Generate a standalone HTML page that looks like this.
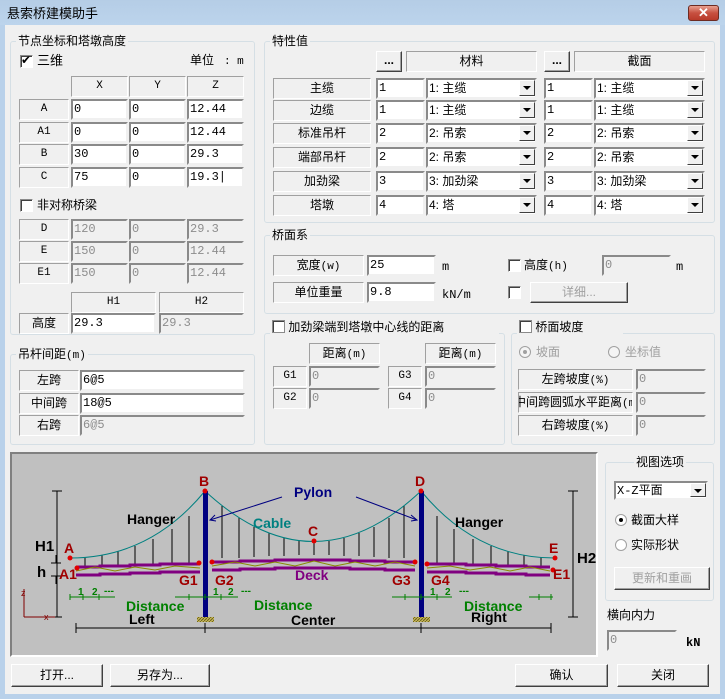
<!DOCTYPE html>
<html><head><meta charset="utf-8">
<style>
*{box-sizing:border-box;margin:0;padding:0}
body{width:725px;height:699px;overflow:hidden;background:#b9d1ea;font-family:"Liberation Sans","Noto Sans CJK SC",sans-serif;font-size:12px;color:#000;position:relative}
.a{position:absolute}
.title{left:0;top:0;width:725px;height:25px;background:linear-gradient(#b5cde6,#bcd4ec);}
.title span{position:absolute;left:7px;top:3px;font-size:13px}
.close{left:688px;top:5px;width:31px;height:16px;background:linear-gradient(#e8a090,#c75040 50%,#b83a2a);border:1px solid #6d2b22;border-radius:3px;color:#fff;font-weight:bold;font-size:13px;line-height:13px;text-align:center}
.client{left:5px;top:25px;width:715px;height:669px;background:#f0f0f0}
.grp{position:absolute;border:1px solid #d5dfe5;border-radius:3px}
.gt{position:absolute;background:#f0f0f0;padding:0 2px;font-size:12px;line-height:14px}
.lb{position:absolute;border:1px solid;border-color:#a0a0a0 #fff #fff #a0a0a0;background:#f0f0f0;text-align:center;font-size:12px;line-height:18px}
.mono{font-family:"Liberation Mono","Noto Sans CJK SC",monospace;font-size:11px}
.ed{position:absolute;background:#fff;border:2px solid;border-color:#8a8a8a #f0f0f0 #f0f0f0 #8a8a8a;font-family:"Liberation Mono",monospace;font-size:12px;line-height:16px;padding-left:1px;overflow:hidden;white-space:nowrap}
.dis{background:#f0f0f0;color:#8d8d8d}
.cb{position:absolute;background:#fff;border:2px solid;border-color:#8a8a8a #f0f0f0 #f0f0f0 #8a8a8a;font-size:12px;line-height:16px;padding-left:1px;white-space:nowrap;overflow:hidden}
.cb i{position:absolute;right:0;top:0;width:16px;height:16px;background:#f0f0f0;border:1px solid;border-color:#fff #404040 #404040 #fff;font-style:normal}
.cb i:after{content:"";position:absolute;left:3px;top:5px;border-left:4px solid transparent;border-right:4px solid transparent;border-top:4px solid #000}
.btn{position:absolute;background:#f0f0f0;border:1px solid;border-color:#fff #404040 #404040 #fff;box-shadow:inset -1px -1px #a0a0a0;text-align:center;font-size:12px}
.chk{position:absolute;width:13px;height:13px;background:#fff;border:1px solid;border-color:#8a8a8a #fff #fff #8a8a8a;box-shadow:inset 1px 1px #404040}
.rad{position:absolute;width:12px;height:12px;border-radius:50%;background:#fff;border:1px solid #a0a0a0}
.t{position:absolute;font-size:12px;line-height:14px;white-space:nowrap}
</style></head><body>
<div class="a title"><span>悬索桥建模助手</span></div>
<div class="a close">✕</div>
<div class="a client"></div>

<div class="grp" style="left:10px;top:41px;width:245px;height:294px"></div>
<div class="gt" style="left:16px;top:34px">节点坐标和塔墩高度</div>
<div class="chk" style="left:20px;top:55px"></div><div class="t" style="left:21px;top:53px;font-size:12px">✔</div>
<div class="t" style="left:37px;top:54px;font-size:13px">三维</div>
<div class="t" style="left:190px;top:53px">单位 <span class="mono">&nbsp;: m</span></div>
<div class="lb mono" style="left:71px;top:76px;width:57px;height:21px">X</div>
<div class="lb mono" style="left:129px;top:76px;width:57px;height:21px">Y</div>
<div class="lb mono" style="left:187px;top:76px;width:57px;height:21px">Z</div>

<div class="lb mono" style="left:19px;top:99px;width:50px;height:21px">A</div>
<div class="ed" style="left:71px;top:99px;width:57px;height:21px">0</div>
<div class="ed" style="left:129px;top:99px;width:57px;height:21px">0</div>
<div class="ed" style="left:187px;top:99px;width:57px;height:21px">12.44</div>
<div class="lb mono" style="left:19px;top:122px;width:50px;height:21px">A1</div>
<div class="ed" style="left:71px;top:122px;width:57px;height:21px">0</div>
<div class="ed" style="left:129px;top:122px;width:57px;height:21px">0</div>
<div class="ed" style="left:187px;top:122px;width:57px;height:21px">12.44</div>
<div class="lb mono" style="left:19px;top:144px;width:50px;height:21px">B</div>
<div class="ed" style="left:71px;top:144px;width:57px;height:21px">30</div>
<div class="ed" style="left:129px;top:144px;width:57px;height:21px">0</div>
<div class="ed" style="left:187px;top:144px;width:57px;height:21px">29.3</div>
<div class="lb mono" style="left:19px;top:167px;width:50px;height:21px">C</div>
<div class="ed" style="left:71px;top:167px;width:57px;height:21px">75</div>
<div class="ed" style="left:129px;top:167px;width:57px;height:21px">0</div>
<div class="ed" style="left:187px;top:167px;width:57px;height:21px">19.3|</div>

<div class="chk" style="left:20px;top:199px"></div>
<div class="t" style="left:37px;top:198px">非对称桥梁</div>
<div class="lb mono" style="left:19px;top:219px;width:50px;height:21px">D</div>
<div class="ed dis" style="left:71px;top:219px;width:57px;height:21px">120</div>
<div class="ed dis" style="left:129px;top:219px;width:57px;height:21px">0</div>
<div class="ed dis" style="left:187px;top:219px;width:57px;height:21px">29.3</div>
<div class="lb mono" style="left:19px;top:241px;width:50px;height:21px">E</div>
<div class="ed dis" style="left:71px;top:241px;width:57px;height:21px">150</div>
<div class="ed dis" style="left:129px;top:241px;width:57px;height:21px">0</div>
<div class="ed dis" style="left:187px;top:241px;width:57px;height:21px">12.44</div>
<div class="lb mono" style="left:19px;top:263px;width:50px;height:21px">E1</div>
<div class="ed dis" style="left:71px;top:263px;width:57px;height:21px">150</div>
<div class="ed dis" style="left:129px;top:263px;width:57px;height:21px">0</div>
<div class="ed dis" style="left:187px;top:263px;width:57px;height:21px">12.44</div>
<div class="lb mono" style="left:71px;top:292px;width:85px;height:21px">H1</div>
<div class="lb mono" style="left:159px;top:292px;width:85px;height:21px">H2</div>
<div class="lb" style="left:19px;top:313px;width:50px;height:21px">高度</div>
<div class="ed" style="left:71px;top:313px;width:85px;height:21px">29.3</div>
<div class="ed dis" style="left:159px;top:313px;width:85px;height:21px">29.3</div>

<div class="grp" style="left:10px;top:354px;width:245px;height:91px"></div>
<div class="gt" style="left:16px;top:347px">吊杆间距<span class="mono">(m)</span></div>
<div class="lb" style="left:19px;top:370px;width:60px;height:21px">左跨</div>
<div class="ed" style="left:80px;top:370px;width:165px;height:21px">6@5</div>
<div class="lb" style="left:19px;top:393px;width:60px;height:21px">中间跨</div>
<div class="ed" style="left:80px;top:393px;width:165px;height:21px">18@5</div>
<div class="lb" style="left:19px;top:415px;width:60px;height:21px">右跨</div>
<div class="ed dis" style="left:80px;top:415px;width:165px;height:21px">6@5</div>

<div class="grp" style="left:264px;top:41px;width:451px;height:182px"></div>
<div class="gt" style="left:270px;top:34px">特性值</div>
<div class="btn" style="left:376px;top:51px;width:26px;height:21px;font-weight:bold;line-height:16px">...</div>
<div class="lb" style="left:406px;top:51px;width:131px;height:21px">材料</div>
<div class="btn" style="left:544px;top:51px;width:26px;height:21px;font-weight:bold;line-height:16px">...</div>
<div class="lb" style="left:574px;top:51px;width:131px;height:21px">截面</div>

<div class="lb" style="left:273px;top:78px;width:98px;height:21px">主缆</div>
<div class="ed" style="left:376px;top:78px;width:49px;height:21px">1</div>
<div class="cb" style="left:426px;top:78px;width:111px;height:21px">1: 主缆<i></i></div>
<div class="ed" style="left:544px;top:78px;width:49px;height:21px">1</div>
<div class="cb" style="left:594px;top:78px;width:111px;height:21px">1: 主缆<i></i></div>

<div class="lb" style="left:273px;top:100px;width:98px;height:21px">边缆</div>
<div class="ed" style="left:376px;top:100px;width:49px;height:21px">1</div>
<div class="cb" style="left:426px;top:100px;width:111px;height:21px">1: 主缆<i></i></div>
<div class="ed" style="left:544px;top:100px;width:49px;height:21px">1</div>
<div class="cb" style="left:594px;top:100px;width:111px;height:21px">1: 主缆<i></i></div>

<div class="lb" style="left:273px;top:123px;width:98px;height:21px">标准吊杆</div>
<div class="ed" style="left:376px;top:123px;width:49px;height:21px">2</div>
<div class="cb" style="left:426px;top:123px;width:111px;height:21px">2: 吊索<i></i></div>
<div class="ed" style="left:544px;top:123px;width:49px;height:21px">2</div>
<div class="cb" style="left:594px;top:123px;width:111px;height:21px">2: 吊索<i></i></div>

<div class="lb" style="left:273px;top:147px;width:98px;height:21px">端部吊杆</div>
<div class="ed" style="left:376px;top:147px;width:49px;height:21px">2</div>
<div class="cb" style="left:426px;top:147px;width:111px;height:21px">2: 吊索<i></i></div>
<div class="ed" style="left:544px;top:147px;width:49px;height:21px">2</div>
<div class="cb" style="left:594px;top:147px;width:111px;height:21px">2: 吊索<i></i></div>

<div class="lb" style="left:273px;top:171px;width:98px;height:21px">加劲梁</div>
<div class="ed" style="left:376px;top:171px;width:49px;height:21px">3</div>
<div class="cb" style="left:426px;top:171px;width:111px;height:21px">3: 加劲梁<i></i></div>
<div class="ed" style="left:544px;top:171px;width:49px;height:21px">3</div>
<div class="cb" style="left:594px;top:171px;width:111px;height:21px">3: 加劲梁<i></i></div>

<div class="lb" style="left:273px;top:195px;width:98px;height:21px">塔墩</div>
<div class="ed" style="left:376px;top:195px;width:49px;height:21px">4</div>
<div class="cb" style="left:426px;top:195px;width:111px;height:21px">4: 塔<i></i></div>
<div class="ed" style="left:544px;top:195px;width:49px;height:21px">4</div>
<div class="cb" style="left:594px;top:195px;width:111px;height:21px">4: 塔<i></i></div>

<div class="grp" style="left:264px;top:235px;width:451px;height:79px"></div>
<div class="gt" style="left:270px;top:228px">桥面系</div>
<div class="lb" style="left:273px;top:255px;width:91px;height:21px">宽度<span class="mono">(w)</span></div>
<div class="ed" style="left:367px;top:255px;width:69px;height:21px">25</div>
<div class="t mono" style="left:442px;top:260px">m</div>
<div class="lb" style="left:273px;top:282px;width:91px;height:21px">单位重量</div>
<div class="ed" style="left:367px;top:282px;width:69px;height:21px">9.8</div>
<div class="t mono" style="left:442px;top:288px">kN/m</div>
<div class="chk" style="left:508px;top:259px"></div>
<div class="t" style="left:524px;top:258px">高度<span class="mono">(h)</span></div>
<div class="ed dis" style="left:602px;top:255px;width:69px;height:21px">0</div>
<div class="t mono" style="left:676px;top:260px">m</div>
<div class="chk" style="left:508px;top:286px"></div>
<div class="btn" style="left:530px;top:282px;width:98px;height:21px;color:#a0a0a0;line-height:18px">详细...</div>

<div class="grp" style="left:264px;top:333px;width:241px;height:112px"></div>
<div class="gt" style="left:270px;top:320px;padding-right:55px"><span style="display:inline-block;width:13px;height:13px;background:#fff;border:1px solid #8a8a8a;box-shadow:inset 1px 1px #404040;vertical-align:-2px"></span> 加劲梁端到塔墩中心线的距离</div>
<div class="lb" style="left:309px;top:343px;width:71px;height:21px">距离<span class="mono">(m)</span></div>
<div class="lb" style="left:425px;top:343px;width:71px;height:21px">距离<span class="mono">(m)</span></div>
<div class="lb mono" style="left:273px;top:366px;width:34px;height:21px">G1</div>
<div class="ed dis" style="left:309px;top:366px;width:71px;height:21px">0</div>
<div class="lb mono" style="left:273px;top:388px;width:34px;height:21px">G2</div>
<div class="ed dis" style="left:309px;top:388px;width:71px;height:21px">0</div>
<div class="lb mono" style="left:388px;top:366px;width:34px;height:21px">G3</div>
<div class="ed dis" style="left:425px;top:366px;width:71px;height:21px">0</div>
<div class="lb mono" style="left:388px;top:388px;width:34px;height:21px">G4</div>
<div class="ed dis" style="left:425px;top:388px;width:71px;height:21px">0</div>

<div class="grp" style="left:511px;top:333px;width:204px;height:112px"></div>
<div class="gt" style="left:517px;top:320px;padding-right:40px"><span style="display:inline-block;width:13px;height:13px;background:#fff;border:1px solid #8a8a8a;box-shadow:inset 1px 1px #404040;vertical-align:-2px"></span> 桥面坡度</div>
<div class="rad" style="left:519px;top:346px;background:#f4f4f4"></div><div class="a" style="left:523px;top:350px;width:4px;height:4px;border-radius:50%;background:#a0a0a0"></div>
<div class="t" style="left:536px;top:345px;color:#a0a0a0">坡面</div>
<div class="rad" style="left:608px;top:346px;background:#f4f4f4"></div>
<div class="t" style="left:625px;top:345px;color:#a0a0a0">坐标值</div>
<div class="lb" style="left:518px;top:369px;width:115px;height:21px">左跨坡度<span class="mono">(%)</span></div>
<div class="ed dis" style="left:636px;top:369px;width:70px;height:21px">0</div>
<div class="lb" style="left:518px;top:392px;width:115px;height:21px;overflow:hidden;white-space:nowrap;text-align:left;text-indent:-5px">中间跨圆弧水平距离<span class="mono">(m</span></div>
<div class="ed dis" style="left:636px;top:392px;width:70px;height:21px">0</div>
<div class="lb" style="left:518px;top:415px;width:115px;height:21px">右跨坡度<span class="mono">(%)</span></div>
<div class="ed dis" style="left:636px;top:415px;width:70px;height:21px">0</div>

<div class="a" style="left:10px;top:452px;width:588px;height:205px;background:#c0c0c0;border:2px solid;border-color:#808080 #fff #fff #808080"></div>
<svg class="a" style="left:0;top:0" width="725" height="699" font-family="Liberation Sans, sans-serif" font-weight="bold">
 <defs>
  <pattern id="hz" width="3" height="3" patternUnits="userSpaceOnUse"><rect width="3" height="3" fill="#c8b858"/><path d="M0 3L3 0" stroke="#6a6020" stroke-width="1"/></pattern>
 </defs>
 <g stroke="#000" stroke-width="1">
  <path d="M85 557V567M102 555V566M118 551V566M135 546V565M153 539V564M172 529V563M189 516V563"/>
  <path d="M222 506V558M239 518V558M254 527V557M269 533V556M284 538V556M299 541V555M314 542V555M329 541V555M344 538V556M359 533V556M374 527V557M389 518V558M404 506V558"/>
  <path d="M437 516V563M454 529V563M473 539V564M491 546V565M508 551V566M524 555V566M541 557V567"/>
 </g>
 <g fill="none" stroke="#008080" stroke-width="1">
  <path d="M70 558Q150 558 205 491"/>
  <path d="M205 491Q314 592 421 491"/>
  <path d="M421 491Q476 558 555 558"/>
 </g>
 <g fill="none" stroke="#800080" stroke-width="3">
  <path d="M76 567L100 567L100 566L130 566L130 565L160 565L160 564L200 564"/>
  <path d="M76 575L100 575L100 574L130 574L130 573L160 573L160 572L200 572"/>
  <path d="M212 562L240 562L240 561L275 561L275 560L350 560L350 561L385 561L385 562L415 562"/>
  <path d="M212 570L240 570L240 569L275 569L275 568L350 568L350 569L385 569L385 570L415 570"/>
  <path d="M427 564L466 564L466 565L496 565L496 566L526 566L526 567L550 567"/>
  <path d="M427 572L466 572L466 573L496 573L496 574L526 574L526 575L550 575"/>
 </g>
 <g fill="none" stroke="#8a8a00" stroke-width="1">
  <path d="M76 571L95 567L115 571L135 567L155 570L175 566L200 568"/>
  <path d="M212 566L235 562L255 566L275 562L295 566L314 561L335 566L355 562L375 566L395 562L415 566"/>
  <path d="M427 568L450 566L470 570L490 567L510 571L530 567L550 571"/>
 </g>
 <rect x="203" y="491" width="5" height="127" fill="#000080"/>
 <rect x="419" y="491" width="5" height="127" fill="#000080"/>
 <rect x="197" y="617" width="17" height="5" fill="url(#hz)"/>
 <rect x="413" y="617" width="17" height="5" fill="url(#hz)"/>
 <g stroke="#000080" fill="none"><path d="M282 497L210 520M356 497L417 520"/><path d="M215 515L210 520L216 521M411 515L417 520L411 521"/></g>
 <g fill="#e00000"><circle cx="205" cy="491" r="2.5"/><circle cx="421" cy="491" r="2.5"/><circle cx="70" cy="558" r="2.5"/><circle cx="555" cy="558" r="2.5"/><circle cx="77" cy="568" r="2.5"/><circle cx="553" cy="570" r="2.5"/><circle cx="314" cy="541" r="2.5"/><circle cx="199" cy="563" r="2.5"/><circle cx="212" cy="562" r="2.5"/><circle cx="415" cy="562" r="2.5"/><circle cx="427" cy="564" r="2.5"/></g>
 <g stroke="#000" fill="none">
  <path d="M57 491V617M52 491H62M52 617H62"/>
  <path d="M573 491V617M568 491H578M568 617H578"/>
  <path d="M76 628H551M76 623V633M205 623V633M421 623V633M551 623V633"/>
  <path d="M51 563H61M51 576H61M56 555V563M56 576V584"/>
 </g>
 <g stroke="#008000" fill="none">
  <path d="M70 597H115M70 594V600M83 594V600M99 594V600"/>
  <path d="M175 597H238M189 594V600M205 594V600M221 594V600"/>
  <path d="M392 597H452M405 594V600M421 594V600M437 594V600"/>
  <path d="M529 597H553M539 594V600M551 594V600"/>
 </g>
 <g stroke="#800000" fill="none"><path d="M24 617H55M24 617V589"/></g>
 <g font-size="14">
  <text x="199" y="486" fill="#a00000">B</text><text x="415" y="486" fill="#a00000">D</text>
  <text x="294" y="497" fill="#000080">Pylon</text>
  <text x="127" y="524" fill="#000">Hanger</text><text x="455" y="527" fill="#000">Hanger</text>
  <text x="253" y="528" fill="#008080">Cable</text>
  <text x="308" y="536" fill="#a00000">C</text>
  <text x="35" y="551" fill="#000" font-size="15">H1</text>
  <text x="577" y="563" fill="#000" font-size="15">H2</text>
  <text x="64" y="553" fill="#a00000">A</text><text x="549" y="553" fill="#a00000">E</text>
  <text x="37" y="577" fill="#000" font-size="15">h</text>
  <text x="59" y="579" fill="#a00000">A1</text><text x="553" y="579" fill="#a00000">E1</text>
  <text x="295" y="580" fill="#800080">Deck</text>
  <text x="179" y="585" fill="#a00000">G1</text><text x="215" y="585" fill="#a00000">G2</text>
  <text x="392" y="585" fill="#a00000">G3</text><text x="431" y="585" fill="#a00000">G4</text>
  <text x="126" y="611" fill="#008000">Distance</text><text x="254" y="610" fill="#008000">Distance</text><text x="464" y="611" fill="#008000">Distance</text>
  <text x="129" y="624" fill="#000">Left</text><text x="291" y="625" fill="#000">Center</text><text x="471" y="622" fill="#000">Right</text>
  <g font-size="10" fill="#008000"><text x="78" y="595">1</text><text x="92" y="595">2</text><text x="104" y="594">---</text>
  <text x="213" y="595">1</text><text x="228" y="595">2</text><text x="241" y="594">---</text>
  <text x="430" y="595">1</text><text x="445" y="595">2</text><text x="459" y="594">---</text></g>
  <text x="21" y="596" fill="#800000" font-size="9" font-weight="normal">z</text>
  <text x="44" y="620" fill="#800000" font-size="9" font-weight="normal">x</text>
 </g>
</svg>

<div class="grp" style="left:605px;top:462px;width:109px;height:139px"></div>
<div class="gt" style="left:634px;top:455px">视图选项</div>
<div class="cb mono" style="left:614px;top:481px;width:94px;height:19px;line-height:14px">X-Z<span style="font-family:'Noto Sans CJK SC'">平面</span><i style="height:14px"></i></div>
<div class="rad" style="left:615px;top:514px"></div><div class="a" style="left:619px;top:518px;width:4px;height:4px;border-radius:50%;background:#000"></div>
<div class="t" style="left:631px;top:513px">截面大样</div>
<div class="rad" style="left:615px;top:539px"></div>
<div class="t" style="left:631px;top:538px">实际形状</div>
<div class="btn" style="left:614px;top:567px;width:96px;height:23px;color:#a0a0a0;line-height:20px">更新和重画</div>
<div class="t" style="left:607px;top:608px">横向内力</div>
<div class="ed dis" style="left:607px;top:630px;width:70px;height:21px">0</div>
<div class="t mono" style="left:686px;top:636px;font-weight:bold">kN</div>

<div class="btn" style="left:11px;top:664px;width:92px;height:23px;line-height:20px">打开...</div>
<div class="btn" style="left:110px;top:664px;width:100px;height:23px;line-height:20px">另存为...</div>
<div class="btn" style="left:515px;top:664px;width:93px;height:23px;line-height:20px">确认</div>
<div class="btn" style="left:617px;top:664px;width:92px;height:23px;line-height:20px">关闭</div>
</body></html>
